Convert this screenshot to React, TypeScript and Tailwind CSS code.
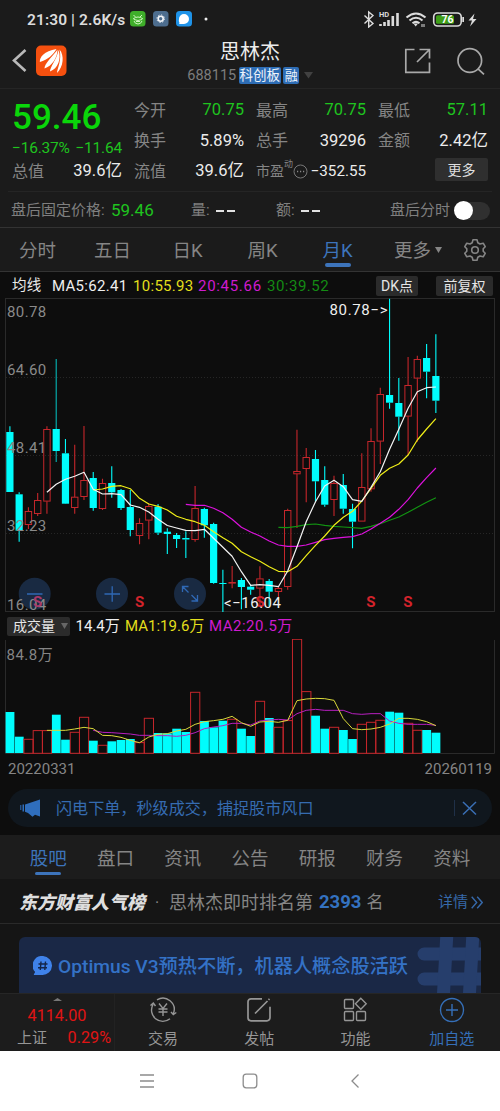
import type { ReactNode } from 'react';

// [body top, body bottom, high, low, direction], in chart pixels
type Candle = [number, number, number, number, 'u' | 'd'];

const candles: Candle[] = [
  [432, 492, 426.3, 492, 'd'],
  [494.3, 530.7, 492.3, 541.7, 'd'],
  [511.3, 524.7, 507.3, 529, 'u'],
  [500.3, 513.7, 493, 516, 'u'],
  [429.3, 501.3, 426.3, 513.7, 'u'],
  [429, 451, 359, 462, 'd'],
  [453.3, 503.7, 439, 504, 'd'],
  [497, 507.7, 444.7, 513.7, 'u'],
  [480.3, 496.7, 426, 500, 'u'],
  [478, 508, 472, 510.7, 'd'],
  [483.3, 508.7, 478.7, 510, 'u'],
  [483, 492.3, 466.3, 497.7, 'd'],
  [490, 508, 489, 510, 'd'],
  [507, 530, 490, 536.3, 'd'],
  [523.3, 535.7, 518.3, 544.3, 'u'],
  [506.3, 520.3, 503.3, 539.3, 'u'],
  [506.7, 532.7, 504, 535, 'd'],
  [531.7, 534, 528.3, 554, 'd'],
  [535, 539, 533, 548, 'd'],
  [538, 539.5, 531.3, 558, 'd'],
  [508.3, 539.7, 486, 541.7, 'u'],
  [509, 525.3, 507.7, 537.7, 'd'],
  [524, 583, 522.7, 583.7, 'd'],
  [583, 584, 569.7, 612, 'd'],
  [582.3, 583.3, 566, 588.3, 'u'],
  [580, 587, 578, 609.3, 'd'],
  [586.7, 589.7, 584.7, 594.7, 'd'],
  [578.7, 588.3, 566.3, 606, 'u'],
  [581, 591.7, 579, 606, 'd'],
  [588.3, 591.7, 586, 597, 'u'],
  [510.3, 586.7, 508.7, 589.7, 'u'],
  [471.3, 474, 429.7, 528, 'u'],
  [457.3, 468.7, 448, 502.3, 'u'],
  [459, 481.3, 450, 501.7, 'd'],
  [480, 504.7, 466.3, 506.7, 'd'],
  [483.3, 499.7, 475.7, 516, 'u'],
  [485, 508.7, 474, 513.7, 'd'],
  [509, 521.7, 503.7, 548.3, 'd'],
  [487.3, 521.3, 453.3, 521.3, 'u'],
  [441.3, 489, 428.3, 491.7, 'u'],
  [394.3, 441.3, 387.7, 464, 'u'],
  [395, 402.7, 298.7, 408.7, 'd'],
  [403, 416.7, 378, 440.7, 'd'],
  [385.3, 416.3, 357, 455, 'u'],
  [359.3, 378.3, 355.7, 441.7, 'u'],
  [358, 371.7, 344, 398.3, 'd'],
  [376, 400.7, 334.3, 413, 'd'],
];

const ma5 = [492.3, 484.3, 479.3, 476.3, 472.3, 489.3, 494, 493.7, 494.7, 505, 507.3, 512, 519.3, 525.5, 528, 530.3, 530.7, 529.3, 538.3, 547.3, 556.3, 571.7, 585.3, 584.7, 585.3, 586.7, 571, 546.7, 521.7, 501.7, 486, 480.3, 486.7, 499.7, 501.3, 487.3, 471.7, 449.3, 429.3, 408.3, 391.7, 387.7, 387];
const ma10 = [490, 489, 486.3, 485.7, 488.7, 498.3, 504, 506.3, 510, 516.3, 519.3, 521.7, 525.3, 531.7, 537.7, 543.3, 551.7, 556.7, 561.3, 566.7, 571.3, 571.7, 566.3, 555.7, 545.3, 536, 525.3, 517.3, 511.3, 501, 488.3, 475.3, 468.3, 464, 455, 440, 429, 418.7];
const ma20 = [504.3, 505.3, 505.3, 508.3, 512.7, 519.3, 527.3, 532, 536, 541, 545, 546.3, 546.3, 545, 542.3, 539.7, 538.3, 537.3, 536.7, 534, 529, 523.3, 517.3, 509.3, 499.7, 488, 477.7, 468];
const ma30 = [527.3, 527.7, 526.3, 524.7, 524, 525.3, 526.3, 527, 527.7, 528.3, 526.3, 523.7, 520.3, 517, 512.3, 507.3, 502.3, 497.7];

const volumes = [41, 16.3, 14, 22.7, 22.7, 38.3, 13.3, 21, 36, 12.3, 8, 11.7, 13, 14, 10.7, 35, 20, 19.7, 24.3, 21, 61, 32, 25.7, 32.3, 34, 24.3, 17, 52, 35, 26, 32.7, 114, 61.7, 37.3, 24.3, 26, 23, 14, 29, 31, 33, 41.3, 40.3, 30, 23, 23, 20.3];
const volMa1 = [361, 361, 361, 357, 352, 356, 376, 377, 382, 391, 398, 381, 373, 371, 363, 358, 343, 335, 332, 328, 319, 338, 349, 336, 334, 337, 331, 272, 267, 265, 266, 271, 326, 356, 359, 357, 352, 342, 325, 325, 328, 335, 347];
const volMa2 = [361, 367, 368, 370, 372, 376, 376, 377, 377, 379, 376, 368, 356, 351, 347, 340, 340, 345, 333, 330, 328, 330, 311, 301, 298, 301, 301, 301, 311, 313, 311, 311, 333, 340, 343, 343, 343, 346];

const RED = '#c5262b';
const CYAN = '#00fdfd';
const cx = (i: number) => 9.9 + 9.26 * i;
const line = (start: number, ys: number[]) => ys.map((y, i) => `${cx(start + i).toFixed(1)},${y}`).join(' ');
const scaled = (ys: number[]) => ys.map((y) => 610 + y / 3);

function StatusBar() {
  return (
    <div className="flex h-[38px] items-center pl-[27px] pr-[22px] text-[#dcdcdc]">
      <span className="w-[103px] whitespace-nowrap pt-[3px] text-[15.5px] font-semibold tracking-[0.1px]">21:30 | 2.6K/s</span>
      <svg className="h-4 w-20" viewBox="0 0 80 16" fill="none">
        <rect width="15.5" height="15.5" rx="3.5" fill="#3fae2a" />
        <path d="M3.5 4l2 2M12 4l-2 2M3 8q5-4 10 0M4 8.5q4 2 8 0M4 10q1 3 4 3t4-3M6 10.5h4" stroke="#cff5c0" />
        <rect x="23" width="15.5" height="15.5" rx="3.5" fill="#4d6d8e" />
        <circle cx="30.7" cy="7.7" r="2.5" stroke="#f3f5f8" strokeWidth="1.6" />
        <circle cx="30.7" cy="7.7" r="3.8" stroke="#f3f5f8" strokeWidth="1" strokeDasharray="1.2 1.78" />
        <rect x="46" width="16" height="15.5" rx="3.5" fill="#1f93e8" />
        <path d="M49 8a5 5 0 1 1 5 5h-4.500c-.5 0-.4-.5 0-1A5 5 0 0 1 49 8z" fill="#fff" />
        <circle cx="76" cy="8" r="1.5" fill="#eee" />
      </svg>
      <svg className="ml-auto h-[18px] w-[116px]" viewBox="362 10 116 18" fill="none" stroke="#dcdcdc">
        <path d="M364.500 15.500l8.500 8-4.300 3.500v-15l4.300 3.500-8.500 8" strokeWidth="1.4" />
        <path d="M380.500 26v-2M384.500 26v-4M388.500 26v-6M392.800 26v-10M397.500 26v-13" strokeWidth="2.6" />
        <text x="379" y="17" fontSize="7.5" fontWeight="700" fill="#dcdcdc" stroke="none">HD</text>
        <path d="M406.500 17.500q9.500-8 19 0M409.500 20.500q6.500-5.500 13 0M412.500 23.200q3.500-2.800 7 0" strokeWidth="2.1" />
        <path d="M413.500 23.500h4.500l-2.300 3z" fill="#dcdcdc" stroke="none" />
        <path d="M422 27v-3M424 24v3" strokeWidth="1" />
        <rect x="433.7" y="13" width="27.5" height="13" rx="4" strokeWidth="1.6" />
        <rect x="436" y="15.2" width="18" height="8.6" rx="1.5" fill="#3e9e17" stroke="none" />
        <rect x="462.3" y="17" width="1.700" height="5" fill="#dcdcdc" stroke="none" />
        <text x="441.500" y="23.300" fontSize="10.5" fontWeight="700" fill="#fff" stroke="none">76</text>
        <path d="M474.500 13.500l-6 7h3.500l-2 6 6.500-7.500h-3.500z" fill="#dcdcdc" stroke="none" />
      </svg>
    </div>
  );
}

function Header() {
  return (
    <div className="flex h-[51px] items-center justify-between border-b border-[#252525] pl-3 pr-[14px]">
      <svg className="h-9 w-[60px]" viewBox="12 45 60 36" fill="none">
        <path d="M25.500 50L14 60.500l11.500 10.500" stroke="#b9b9b9" strokeWidth="2.6" />
        <rect x="36" y="45.5" width="30.500" height="30.500" rx="5" fill="#f5500f" />
        <path d="M39.800 62C39.500 57 44 51 56.500 49C53.500 54.500 48 59.500 39.800 62z" fill="#fff" />
        <path d="M44.500 68.500C44.500 64 51 58 57.500 49.800C57.500 58 52 66 44.500 68.500z" fill="#fff" />
        <path d="M50 71.500C50 67 56.500 60 58.600 50C61.500 59 58 68.500 50 71.500z" fill="#fff" />
        <path d="M57 73C57.500 67.500 62 60 59.500 49.500C64.500 55 63.500 67 57 73z" fill="#fff" />
      </svg>
      <div className="ml-[26px] flex flex-1 flex-col items-center">
        <div className="h-[25px] text-[20px] leading-[23px] text-[#ededed]">思林杰</div>
        <div className="flex h-[19px] items-center gap-[2.500px] text-[14px]">
          <span className="text-[14.5px] text-[#7d7d7d]">688115</span>
          <span className="h-[17px] w-[42px] rounded-xs bg-[#2e6db5] text-center text-[13.5px] leading-[17px] text-[#eef4fb]">科创板</span>
          <span className="h-[17px] w-4 rounded-xs bg-[#2e6db5] text-center text-[13px] leading-[17px] text-[#eef4fb]">融</span>
          <svg className="ml-0.5 h-[7px] w-[9px]" viewBox="0 0 9 7"><path d="M0 0h9L4.500 6.500z" fill="#414141" /></svg>
        </div>
      </div>
      <svg className="h-8 w-[84px]" viewBox="402 46.500 84 32" fill="none" stroke="#a9a9a9" strokeWidth="1.7">
        <path d="M414.500 49h-8.700v22.800H429.500V62M417 61.500L429 49.500M419.500 49h10v9" />
        <circle cx="469.800" cy="60" r="11.800" />
        <path d="M478 68.300l6 5.500" />
      </svg>
    </div>
  );
}

function Cell({ label, value, tone = 'text-[#ececec]' }: { label: ReactNode; value: string; tone?: string }) {
  return (
    <div className="flex h-[30.5px] items-center justify-between whitespace-nowrap">
      <span className="text-[16px] text-[#858585]">{label}</span>
      <span className={`text-[16.5px] ${tone}`}>{value}</span>
    </div>
  );
}

function Quote() {
  const green = 'text-[#1fc41f]';
  return (
    <div className="grid h-[102px] grid-cols-4 gap-x-3 px-3 pt-[6.5px]">
      <div>
        <div className="flex h-[45px] items-center text-[35px] font-medium text-[#0ad60a]">59.46</div>
        <div className="flex h-4 items-center justify-between whitespace-nowrap text-[15.5px] tracking-[-0.2px] text-[#1fc41f]">
          <span>−16.37%</span>
          <span>−11.64</span>
        </div>
        <Cell label="总值" value="39.6亿" />
      </div>
      <div>
        <Cell label="今开" value="70.75" tone={green} />
        <Cell label="换手" value="5.89%" />
        <Cell label="流值" value="39.6亿" />
      </div>
      <div>
        <Cell label="最高" value="70.75" tone={green} />
        <Cell label="总手" value="39296" />
        <div className="flex h-[30.5px] items-center whitespace-nowrap">
          <span className="text-[14px] text-[#858585]">市盈</span>
          <span className="-mt-3.5 text-[9px] text-[#858585]">动</span>
          <svg className="mr-0.5 h-[15px] w-[15px]" viewBox="0 0 15 15">
            <circle cx="7.5" cy="7.5" r="6.500" fill="none" stroke="#777" />
            <path d="M4 7.500h1.200M7 7.500h1.200M10 7.500h1.200" stroke="#888" strokeWidth="1.4" />
          </svg>
          <span className="ml-auto text-[15.2px] text-[#ececec]">−352.55</span>
        </div>
      </div>
      <div>
        <Cell label="最低" value="57.11" tone={green} />
        <Cell label="金额" value="2.42亿" />
        <div className="mt-[1.5px] ml-auto h-[23px] w-[53px] rounded-xs bg-[#2f2f2f] text-center text-[14px] leading-[24px] text-[#dedede]">更多</div>
      </div>
    </div>
  );
}

function AfterHours() {
  return (
    <div className="mx-2 flex h-9 items-center whitespace-nowrap border-t border-[#252525] pl-[3px] pt-0.5 text-[15px] text-[#7f7f7f]">
      <span className="w-[100px]">盘后固定价格:</span>
      <span className="w-[80px] text-[17px] text-[#1fc41f]">59.46</span>
      <span className="w-[25px]">量:</span>
      <span className="flex w-[60px] gap-[3px]"><i className="h-0.5 w-2 bg-[#e2e2e2]" /><i className="h-0.5 w-2 bg-[#e2e2e2]" /></span>
      <span className="w-[25px]">额:</span>
      <span className="flex gap-[3px]"><i className="h-0.5 w-2 bg-[#e2e2e2]" /><i className="h-0.5 w-2 bg-[#e2e2e2]" /></span>
      <span className="ml-auto">盘后分时</span>
      <span className="ml-1 mr-0.5 flex h-[18px] w-9 items-center rounded-full bg-[#303030]">
        <span className="h-[19px] w-[19px] rounded-full bg-white" />
      </span>
    </div>
  );
}

function PeriodTabs() {
  return (
    <div className="flex h-[45px] items-stretch border-y border-[#333] text-[18.5px] text-[#858585]">
      {['分时', '五日', '日K', '周K', '月K'].map((t) => (
        <div key={t} className={`flex w-[75px] flex-col items-center pt-[9px] leading-[28px] ${t === '月K' ? 'text-[#3d74bb]' : ''}`}>
          {t}
          {t === '月K' && <span className="mt-[-2px] h-1 w-[26px] rounded-full bg-[#3d74bb]" />}
        </div>
      ))}
      <div className="flex flex-1 items-center gap-1 pl-[19px]">
        <span className="pt-1">更多</span>
        <svg className="h-1.5 w-[7px]" viewBox="0 0 7 6"><path d="M0 0h7L3.500 6z" fill="#858585" /></svg>
        <svg className="ml-auto mr-[13px] h-6 w-6" viewBox="0 0 24 24" fill="none" stroke="#858585" strokeWidth="1.6" strokeLinejoin="round">
          <path d="M10 1.700h4l.8 3 2.200 1.300 3.200-.8 2 3.500-2 2.100v2.400l2 2.100-2 3.500-3.200-.8-2.200 1.300-.8 3h-4l-.8-3L7 18l-3.200.8-2-3.500 2-2.100v-2.400l-2-2.100 2-3.500L7 6l2.200-1.300z" />
          <circle cx="12" cy="12" r="3.3" />
        </svg>
      </div>
    </div>
  );
}

function MaLegend() {
  return (
    <div className="flex h-[26px] items-center whitespace-nowrap pl-3 pr-[7px] pt-0.5 text-[15px] tracking-[0.3px]">
      <span className="w-10 text-[14.5px] text-[#e8e8e8]">均线</span>
      <span className="w-[81px] text-[#efefef]">MA5:62.41</span>
      <span className="w-[65px] text-[#e3df1c]">10:55.93</span>
      <span className="w-[69px] tracking-[0.7px] text-[#cf1bcf]">20:45.66</span>
      <span className="tracking-[0.5px] text-[#148a14]">30:39.52</span>
      <span className="ml-auto h-5 w-[42px] rounded-xs bg-[#2b2b2b] text-center text-[14px] leading-5 tracking-normal text-[#e6e6e6]">DK点</span>
      <span className="ml-[18px] h-5 w-[57px] rounded-xs bg-[#2b2b2b] text-center text-[14px] leading-5 tracking-normal text-[#e6e6e6]">前复权</span>
    </div>
  );
}

function PriceChart() {
  return (
    <svg className="block h-[315px] w-full" viewBox="0 298 500 315" fill="none">
      <rect x="5.5" y="298.5" width="489" height="313" stroke="#2a2a2a" />
      <path d="M6 377.500h488M6 455.500h488M6 533.500h488" stroke="#262626" strokeDasharray="1 2" />
      {candles.map(([top, bottom, high, low, dir], i) => {
        const color = dir === 'u' ? RED : CYAN;
        return (
          <g key={i}>
            <path d={`M${cx(i)} ${high}V${top}M${cx(i)} ${bottom}V${low}`} stroke={color} strokeWidth={1.1} opacity={i === 5 ? 0.7 : 1} />
            {dir === 'u' ? (
              <rect x={cx(i) - 3.2} y={top + 0.2} width={6.4} height={Math.max(bottom - top - 0.4, 0.6)} stroke={RED} />
            ) : (
              <rect x={cx(i) - 3.6} y={top} width={7.2} height={bottom - top} fill={CYAN} />
            )}
          </g>
        );
      })}
      <g strokeWidth="1.2" strokeLinejoin="round">
        <polyline points={line(29, ma30)} stroke="#129312" />
        <polyline points={line(19, ma20)} stroke="#dc12dc" />
        <polyline points={line(9, ma10)} stroke="#f0ee18" />
        <polyline points={line(4, ma5)} stroke="#f4f4f4" />
      </g>
      <g fill="#1a2c47" fillOpacity="0.92">
        <circle cx="34.7" cy="593.7" r="16" />
        <circle cx="112" cy="593.7" r="16" />
        <circle cx="190" cy="593.7" r="16" />
      </g>
      <g fontSize="15" fill="#8a8a8a" letterSpacing="0.4">
        <text x="7" y="317">80.78</text>
        <text x="7" y="375">64.60</text>
        <text x="7" y="453">48.41</text>
        <text x="7" y="531">32.23</text>
        <text x="7" y="610">16.04</text>
      </g>
      <path d="M27 594h15.500M104.500 594h15.500M112.200 586.200v15.600M182.500 592v-5.500h6M183 587l5.500 5.500M197.500 595v6h-6M197 600.500l-5.500-5.500" stroke="#2f68b4" strokeWidth="1.3" />
      <g fontSize="15" fontWeight="700" fill="#d3232b" textAnchor="middle">
        <text x="37.7" y="607" fill="#a8396a">S</text>
        <text x="139.5" y="607">S</text>
        <text x="260" y="607">S</text>
        <text x="370.8" y="607">S</text>
        <text x="407.8" y="607">S</text>
      </g>
      <g fontSize="15" fill="#efefef">
        <text x="329.5" y="314.5" textLength="58">80.78−&gt;</text>
        <text x="224" y="608" textLength="57">&lt;−16.04</text>
      </g>
    </svg>
  );
}

function VolumeChart() {
  return (
    <div>
      <div className="flex h-[26px] items-center whitespace-nowrap pl-[7px] text-[15px]">
        <span className="mr-[5.5px] flex h-[19px] w-[63px] items-center gap-1.5 rounded-xs bg-[#2b2b2b] pl-1.5 text-[14px] text-[#e6e6e6]">
          成交量
          <svg className="h-1.5 w-[7px]" viewBox="0 0 7 6"><path d="M0 0h7L3.500 6z" fill="#666" /></svg>
        </span>
        <span className="w-[49.5px] text-[#efefef]">14.4万</span>
        <span className="w-[84px] text-[#e3df1c]">MA1:19.6万</span>
        <span className="tracking-[0.5px] text-[#cf1bcf]">MA2:20.5万</span>
      </div>
      <svg className="block h-[115px] w-full" viewBox="0 639 500 115" fill="none">
        <path d="M5.500 640v113.500h489V640" stroke="#2a2a2a" />
        {volumes.map((h, i) =>
          candles[i][4] === 'u' ? (
            <rect key={i} x={cx(i) - 4.5} y={753.3 - h} width={9.2} height={h} stroke={RED} />
          ) : (
            <rect key={i} x={cx(i) - 4.3} y={753 - h} width={8.8} height={h} fill={CYAN} />
          ),
        )}
        <polyline points={line(9, scaled(volMa2))} stroke="#b81fc0" />
        <polyline points={line(4, scaled(volMa1))} stroke="#d9d93a" />
        <text x="6.5" y="659.5" fontSize="15" letterSpacing="0.5" fill="#858585">84.8万</text>
      </svg>
      <div className="flex h-[31px] items-center justify-between pl-2 pr-2 text-[15px] text-[#858585]">
        <span>20220331</span>
        <span>20260119</span>
      </div>
    </div>
  );
}

function Banner() {
  return (
    <div className="mx-2 mt-1 flex h-[38px] items-center rounded-full bg-[#10171e] pl-3 text-[16.1px] text-[#356bb0]">
      <svg className="h-[18px] w-5" viewBox="0 0 20 18" fill="#2f6ebd">
        <path d="M5 5.500L20 .5v17L15 15.800l-2.500 2L8 14 5 12.800zM2.500 5.500h1.500v7H2.500zM.3 6h1v5h-1z" />
      </svg>
      <span className="ml-4 whitespace-nowrap pt-[3px]">闪电下单，秒级成交，捕捉股市风口</span>
      <svg className="ml-auto mr-[15px] h-4 w-[23px]" viewBox="0 0 23 16" fill="none">
        <path d="M.5 0v16" stroke="#1f3048" />
        <path d="M9 2l13 12.500M22 2L9 14.500" stroke="#3a6fb5" strokeWidth="1.5" />
      </svg>
    </div>
  );
}

function InfoTabs() {
  return (
    <div className="mt-2 grid h-11 grid-cols-7 bg-[#1c1c1c] px-[14.5px] text-[18.5px] text-[#858585]">
      {['股吧', '盘口', '资讯', '公告', '研报', '财务', '资料'].map((t, i) => (
        <div key={t} className={`flex flex-col items-center pt-2.5 leading-[28px] ${i === 0 ? 'text-[#3d74bb]' : ''}`}>
          {t}
          {i === 0 && <span className="-mt-px h-[3px] w-[26px] rounded-full bg-[#3d74bb]" />}
        </div>
      ))}
    </div>
  );
}

function RankRow() {
  return (
    <div className="flex h-[45px] items-center whitespace-nowrap border-b border-[#2a2a2a] bg-[#151515] pl-[19px] pr-[17px] pt-[3px]">
      <span className="text-[18px] font-black italic text-[#dedede]">东方财富人气榜</span>
      <span className="w-6 text-center text-[#858585]">·</span>
      <span className="text-[18px] text-[#858585]">思林杰即时排名第</span>
      <span className="mx-1.5 text-[18.5px] font-bold text-[#3472c0]">2393</span>
      <span className="-ml-px text-[17px] text-[#858585]">名</span>
      <span className="ml-auto text-[15px] text-[#3669aa]">详情</span>
      <svg className="ml-[3px] h-[13px] w-3" viewBox="0 0 12 13" fill="none" stroke="#3669aa" strokeWidth="1.4">
        <path d="M.7.700l5 5.800-5 5.800M6.200.700l5 5.800-5 5.800" />
      </svg>
    </div>
  );
}

function TopicCard() {
  return (
    <div className="h-[69px] overflow-hidden bg-[#151515] px-[19px] pt-[13px]">
      <div className="flex h-[80px] items-start overflow-hidden rounded-t-md bg-[#1a2846] pl-[14px]">
        <svg className="mt-[19px] h-5 w-5 shrink-0" viewBox="0 0 20 20">
          <path d="M10 0a9.500 9.500 0 1 1-1 19H1.500c-.8 0-.8-.8-.3-1.300l1-1.700A9.500 9.500 0 0 1 10 0z" fill="#3f82ea" />
          <path d="M8 5.500L7.300 14M12.500 5.500L11.800 14M5.500 8h9M5 11.700h9" stroke="#14264a" strokeWidth="1.4" />
        </svg>
        <span className="ml-[5px] mt-4 whitespace-nowrap text-[19.2px] leading-7 font-medium text-[#3472c6]">Optimus V3预热不断，机器人概念股活跃</span>
        <svg className="ml-auto h-[58px] w-16 shrink-0" viewBox="0 0 64 58" fill="none" stroke="#263e6c" strokeWidth="13" strokeLinecap="round">
          <path d="M7 17h60M7 42h60" />
          <path d="M30-5l-4 70M56-5l-4 70" />
        </svg>
      </div>
    </div>
  );
}

function BottomBar() {
  const actions: { label: string; icon: ReactNode }[] = [
    {
      label: '交易',
      icon: (
        <>
          <path d="M8 2.800a11.300 11.300 0 0 1 16.500 13.500M21 21.800A11.300 11.300 0 0 1 4 7.500M1.500 8.500l2.800-2.500 2.200 3M22 15l2.300 2.500 3-2" />
          <path d="M10 6.500l4 5 4-5M14 11.500V19M9.500 12h9M9.500 15h9" />
        </>
      ),
    },
    {
      label: '发帖',
      icon: <path d="M17 1.800H6a3 3 0 0 0-3 3v16a3 3 0 0 0 3 3h16a3 3 0 0 0 3-3v-11M10 16.500L22.500 4M23.500 2.800l1-1" strokeWidth="1.7" />,
    },
    {
      label: '功能',
      icon: (
        <>
          <rect x="3.5" y="2.5" width="9" height="9" rx="1" />
          <path d="M19.800 1.300l5.400 5.500-5.400 5.500-5.400-5.500z" />
          <rect x="3.5" y="14.5" width="9" height="9" rx="1" />
          <rect x="15.5" y="14.5" width="9" height="9" rx="1" />
        </>
      ),
    },
    {
      label: '加自选',
      icon: (
        <>
          <circle cx="14" cy="13" r="11.5" />
          <path d="M8 13h12M14 7v12" />
        </>
      ),
    },
  ];
  return (
    <div className="flex h-[58px] border-t border-[#262626] bg-[#1c1c1c]">
      <div className="w-[115px] shrink-0 border-r border-[#222] text-[16.2px] leading-[22px] text-[#e01414]">
        <svg className="ml-[53px] mt-1 block h-[3px] w-[9px]" viewBox="0 0 9 3"><path d="M0 3l4.500-3L9 3z" fill="#777" /></svg>
        <div className="mt-1 text-center">4114.00</div>
        <div className="flex items-center justify-between pl-[17px] pr-[3px]">
          <span className="text-[15px] text-[#969696]">上证</span>
          <span>0.29%</span>
        </div>
      </div>
      {actions.map((a) => (
        <div key={a.label} className={`flex w-[96.2px] flex-col items-center pt-[3px] text-[15px] ${a.label === '加自选' ? 'text-[#356fb8]' : 'text-[#969696]'}`}>
          <svg className="h-[26px] w-7" viewBox="0 0 28 26" fill="none" stroke="currentColor" strokeWidth="1.4">{a.icon}</svg>
          <span className="mt-1 leading-[24px]">{a.label}</span>
        </div>
      ))}
    </div>
  );
}

export default function App() {
  return (
    <div className="h-[1111px] w-[500px] overflow-hidden bg-[#0d0d0d] font-['Roboto','Noto_Sans_CJK_SC',sans-serif]">
      <div className="bg-[#1b1b1b]">
        <StatusBar />
        <Header />
        <Quote />
        <AfterHours />
        <PeriodTabs />
      </div>
      <MaLegend />
      <PriceChart />
      <VolumeChart />
      <Banner />
      <InfoTabs />
      <RankRow />
      <TopicCard />
      <BottomBar />
      <div className="flex h-[60px] items-center bg-white">
        <svg className="h-[60px] w-full" viewBox="0 0 500 60" fill="none" stroke="#8c8c8c" strokeWidth="1.3">
          <path d="M140 24h14M140 30h14M140 36h14" />
          <rect x="243.2" y="23.2" width="13.6" height="13.6" rx="3" />
          <path d="M358.500 23.500l-6.500 6.500 6.500 6.500" />
        </svg>
      </div>
    </div>
  );
}
